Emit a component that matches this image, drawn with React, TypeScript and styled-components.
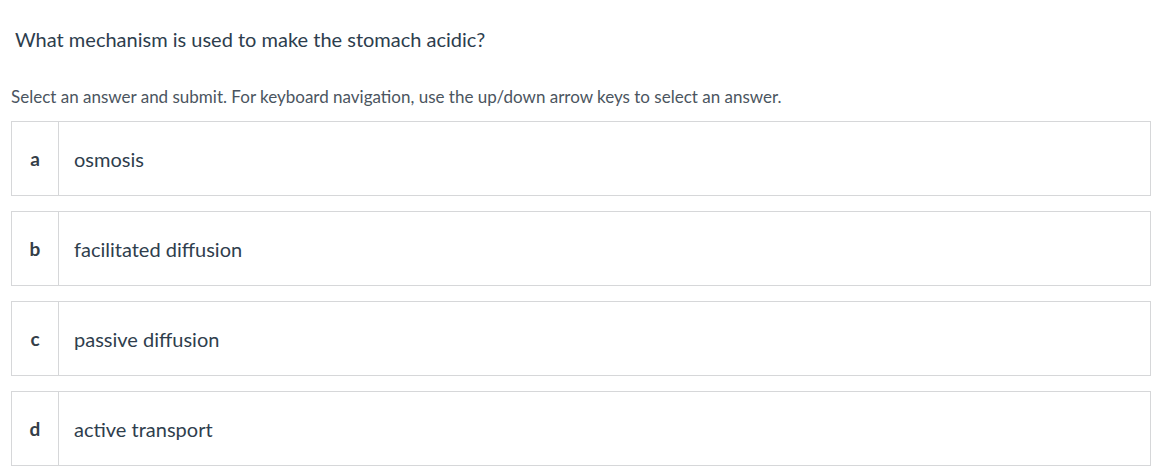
import React from "react";
import styled, { createGlobalStyle } from "styled-components";

const GlobalStyle = createGlobalStyle`
  html, body {
    margin: 0;
    padding: 0;
    background: #ffffff;
  }
  body {
    font-family: Lato, "Noto Sans", "Liberation Sans", sans-serif;
  }
`;

const answers = [
  { letter: "a", text: "osmosis" },
  { letter: "b", text: "facilitated diffusion" },
  { letter: "c", text: "passive diffusion" },
  { letter: "d", text: "active transport" },
];

const App = () => {
  return (
    <>
      <GlobalStyle />
      <Page>
        <Question>What mechanism is used to make the stomach acidic?</Question>
        <Instructions>
          Select an answer and submit. For keyboard navigation, use the up/down
          arrow keys to select an answer.
        </Instructions>
        <AnswerList>
          {answers.map((a) => (
            <Answer key={a.letter}>
              <Letter>{a.letter}</Letter>
              <AnswerText>{a.text}</AnswerText>
            </Answer>
          ))}
        </AnswerList>
      </Page>
    </>
  );
};

const Page = styled.div`
  display: flex;
  flex-direction: column;
  padding: 26px 13px 0 11px;
`;

const Question = styled.h2`
  margin: 0 0 0 4px;
  font-size: 20px;
  font-weight: 400;
  line-height: 26px;
  color: #2d3d4d;
`;

const Instructions = styled.p`
  margin: 35px 0 0 0;
  font-size: 17px;
  line-height: 20px;
  color: #4b5560;
`;

const AnswerList = styled.ul`
  list-style: none;
  margin: 14px 0 0 0;
  padding: 0;
  display: flex;
  flex-direction: column;
  gap: 15px;
`;

const Answer = styled.li`
  display: flex;
  align-items: stretch;
  height: 75px;
  box-sizing: border-box;
  border: 1px solid #d6d7d9;
  background: #ffffff;
  cursor: pointer;
`;

const Letter = styled.div`
  width: 46px;
  flex-shrink: 0;
  display: flex;
  align-items: center;
  justify-content: center;
  border-right: 1px solid #d6d7d9;
  font-size: 19px;
  font-weight: 700;
  color: #343e48;
`;

const AnswerText = styled.div`
  display: flex;
  align-items: center;
  padding-left: 15px;
  font-size: 20px;
  color: #2f3e4d;
`;

export default App;
